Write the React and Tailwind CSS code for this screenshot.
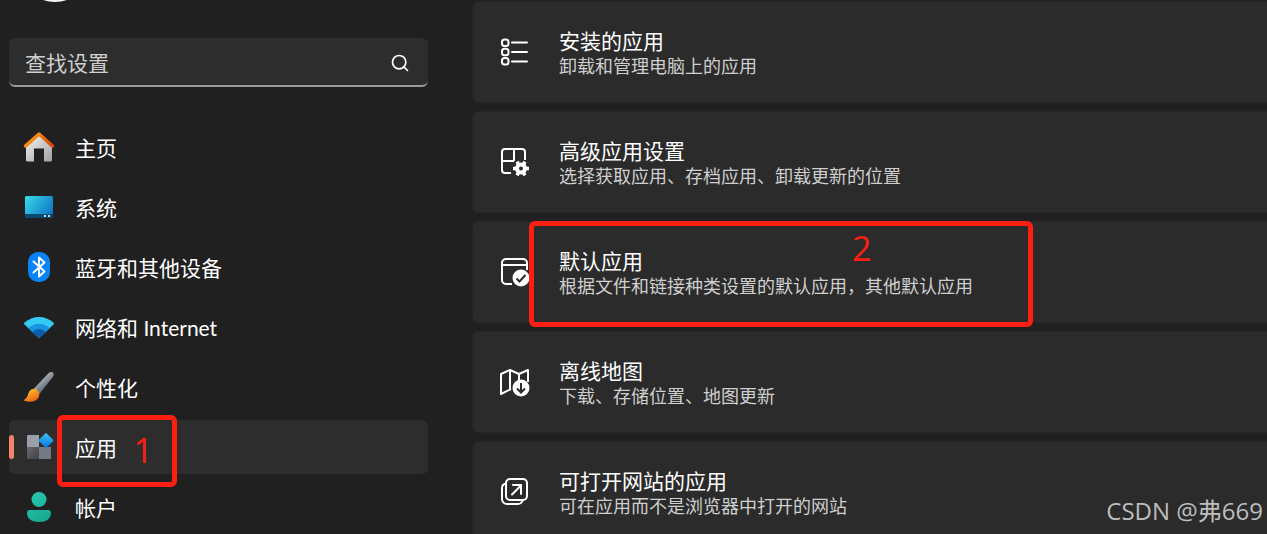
import { Search } from 'lucide-react'

/* ── Sidebar icons ── */

function HomeIcon() {
  return (
    <svg width="32" height="32" viewBox="0 0 32 32" fill="none">
      <defs>
        <linearGradient id="roof" x1="8" y1="2" x2="24" y2="18" gradientUnits="userSpaceOnUse">
          <stop stopColor="#ff9c12" />
          <stop offset="1" stopColor="#d9480a" />
        </linearGradient>
        <linearGradient id="wall" x1="5" y1="6" x2="27" y2="30" gradientUnits="userSpaceOnUse">
          <stop stopColor="#f0f0f0" />
          <stop offset="1" stopColor="#a3a3a3" />
        </linearGradient>
      </defs>
      <path d="M3 14 16 3l13 11v15a1.500 1.500 0 0 1-1.500 1.500H21V17.500H11v13H4.500A1.500 1.500 0 0 1 3 29z" fill="url(#wall)" />
      <path d="M2.500 15 16 3l13.500 12" stroke="url(#roof)" strokeWidth="3.500" strokeLinecap="round" strokeLinejoin="round" />
    </svg>
  )
}

function SystemIcon() {
  return (
    <svg width="32" height="32" viewBox="0 0 32 32">
      <defs>
        <linearGradient id="screen" x1="2" y1="5" x2="28" y2="24" gradientUnits="userSpaceOnUse">
          <stop stopColor="#38dce8" />
          <stop offset="1" stopColor="#0f74c6" />
        </linearGradient>
      </defs>
      <rect x="2" y="5" width="28" height="22" rx="1.500" fill="url(#screen)" />
      <path d="M2 23h28v2.500a1.500 1.500 0 0 1-1.500 1.500h-25A1.500 1.500 0 0 1 2 25.500z" fill="#0b4a70" />
      <path d="M21 24h2v2h-2zM25 24h2v2h-2z" fill="#c3dcea" />
    </svg>
  )
}

function BluetoothIcon() {
  return (
    <svg width="32" height="32" viewBox="0 0 32 32" fill="none">
      <rect x="5" y="1" width="22" height="30" rx="10" fill="#0a84f5" />
      <path d="m10.500 10.500 11 10L16 25.500V6.500l5.500 5-11 10" stroke="#fff" strokeWidth="2" strokeLinecap="round" strokeLinejoin="round" />
    </svg>
  )
}

function NetworkIcon() {
  return (
    <svg width="32" height="32" viewBox="0 0 32 32">
      <path d="M1.500 13.500a1.500 1.500 0 0 1 0-2C9.500 4 22.500 4 30.500 11.500a1.500 1.500 0 0 1 0 2L17 26.300a1.500 1.500 0 0 1-2 0z" fill="#35c9f5" />
      <path d="M5.500 17.200C11.500 11.200 20.500 11.200 26.500 17.200L17 26.300a1.500 1.500 0 0 1-2 0z" fill="#1793e3" />
      <path d="M9.500 21.100c4-4 9-4 13 0L17 26.300a1.500 1.500 0 0 1-2 0z" fill="#0c5cab" />
    </svg>
  )
}

function BrushIcon() {
  return (
    <svg width="32" height="32" viewBox="0 0 32 32">
      <defs>
        <linearGradient id="handle" x1="15" y1="8" x2="22" y2="16" gradientUnits="userSpaceOnUse">
          <stop stopColor="#b7bec5" />
          <stop offset="1" stopColor="#6a737c" />
        </linearGradient>
        <linearGradient id="bristle" x1="6" y1="17" x2="13" y2="31" gradientUnits="userSpaceOnUse">
          <stop stopColor="#ffc531" />
          <stop offset="1" stopColor="#e8590c" />
        </linearGradient>
      </defs>
      <path d="M10.500 18 25.500 2.200c1.500-1.500 3.500-1.500 4.500-.7 1 1 .8 2.700 0 4.200L16 23.500z" fill="url(#handle)" />
      <path d="M6 21c2-3.500 6-4.200 8.500-1.800 2.500 2.500 2.300 6.300-.3 9C11.500 31 6 31.300 1.500 29.800c-.7-.3-.6-1 0-1.400C5 26.500 4.500 23.500 6 21z" fill="url(#bristle)" />
    </svg>
  )
}

function AppsIcon() {
  return (
    <svg width="32" height="32" viewBox="0 0 32 32">
      <defs>
        <linearGradient id="tile" x1="4" y1="16" x2="16" y2="28" gradientUnits="userSpaceOnUse">
          <stop stopColor="#66696d" />
          <stop offset="1" stopColor="#3f4145" />
        </linearGradient>
        <linearGradient id="diamond" x1="17" y1="3" x2="27" y2="15" gradientUnits="userSpaceOnUse">
          <stop stopColor="#41c9f5" />
          <stop offset="1" stopColor="#0b76d8" />
        </linearGradient>
      </defs>
      <path d="M5 4h11v12H4V5a1 1 0 0 1 1-1z" fill="#9ba0a8" />
      <path d="M4 16h12v12H5a1 1 0 0 1-1-1z" fill="url(#tile)" />
      <path d="M16 16h12v11a1 1 0 0 1-1 1H16z" fill="#747a83" />
      <rect x="17.500" y="4" width="11" height="11" rx="1" transform="rotate(45 23 9.500)" fill="url(#diamond)" />
    </svg>
  )
}

function AccountIcon() {
  return (
    <svg width="32" height="32" viewBox="0 0 32 32">
      <defs>
        <linearGradient id="person" x1="8" y1="1" x2="24" y2="31" gradientUnits="userSpaceOnUse">
          <stop stopColor="#27cbb0" />
          <stop offset="1" stopColor="#15a68e" />
        </linearGradient>
      </defs>
      <circle cx="16" cy="8.500" r="7.500" fill="url(#person)" />
      <path d="M7 19h18a3 3 0 0 1 3 3c0 6-5 9-12 9S4 28 4 22a3 3 0 0 1 3-3z" fill="url(#person)" />
    </svg>
  )
}

/* ── Card icons ── */

function ListIcon() {
  return (
    <svg width="32" height="32" viewBox="0 0 32 32" fill="none" stroke="#fff" strokeWidth="2">
      <rect x="3" y="3.500" width="6.500" height="6.500" rx="2.500" />
      <rect x="3" y="12.700" width="6.500" height="6.500" rx="2.500" />
      <rect x="3" y="22" width="6.500" height="6.500" rx="2.500" />
      <path d="M13 6.500h15M13 16h15M13 25.500h15" strokeLinecap="round" />
    </svg>
  )
}

function AdvancedIcon() {
  return (
    <svg width="32" height="32" viewBox="0 0 32 32" fill="none">
      <path d="M12 27H6a3 3 0 0 1-3-3V6a3 3 0 0 1 3-3h17a3 3 0 0 1 3 3v8M15 3v12M3 15h12" stroke="#fff" strokeWidth="2" />
      {/* six-toothed gear */}
      <path d="M14 22.500h16M18 15.600l8 13.800M26 15.600l-8 13.800" stroke="#fff" strokeWidth="3.500" />
      <circle cx="22" cy="22.500" r="6" fill="#fff" />
      <circle cx="22" cy="22.500" r="2" fill="#2b2b2b" />
    </svg>
  )
}

function DefaultIcon() {
  return (
    <svg width="32" height="32" viewBox="0 0 32 32" fill="none">
      <path d="M13 28H7a4 4 0 0 1-4-4V7a4 4 0 0 1 4-4h17a4 4 0 0 1 4 4v7M3 9h25" stroke="#fff" strokeWidth="2" />
      <circle cx="22" cy="22" r="8.500" fill="#fff" />
      <path d="m17.500 22.500 3 3 6-6.500" stroke="#2b2b2b" strokeWidth="2" />
    </svg>
  )
}

function MapIcon() {
  return (
    <svg width="32" height="32" viewBox="0 0 32 32" fill="none">
      <path d="M12 23 2 28V8l9-4 9 4 9-4v12M11 4v20M20 8v6" stroke="#fff" strokeWidth="2" strokeLinejoin="round" />
      <circle cx="22" cy="22" r="8.500" fill="#fff" />
      <path d="M22 17v9M18 22.500l4 4 4-4" stroke="#2b2b2b" strokeWidth="2" />
    </svg>
  )
}

function WebsiteIcon() {
  return (
    <svg width="32" height="32" viewBox="0 0 32 32" fill="none" stroke="#fff" strokeWidth="2">
      <rect x="7" y="3" width="21" height="21" rx="4" />
      <path d="M7 7.500C4.500 8 3 9 3 12v11a5 5 0 0 0 5 5h11c3 0 4-1.500 5-4" />
      <path d="M13 18.500 22 9.500M14 9h8v9" strokeLinecap="round" />
    </svg>
  )
}

const NAV_ITEMS = [
  { label: '主页', icon: HomeIcon },
  { label: '系统', icon: SystemIcon },
  { label: '蓝牙和其他设备', icon: BluetoothIcon },
  { label: '网络和 Internet', icon: NetworkIcon },
  { label: '个性化', icon: BrushIcon },
  { label: '应用', icon: AppsIcon, active: true, step: '1' },
  { label: '帐户', icon: AccountIcon },
]

const CARDS = [
  { title: '安装的应用', text: '卸载和管理电脑上的应用', icon: ListIcon },
  { title: '高级应用设置', text: '选择获取应用、存档应用、卸载更新的位置', icon: AdvancedIcon },
  { title: '默认应用', text: '根据文件和链接种类设置的默认应用，其他默认应用', icon: DefaultIcon, step: '2' },
  { title: '离线地图', text: '下载、存储位置、地图更新', icon: MapIcon },
  { title: '可打开网站的应用', text: '可在应用而不是浏览器中打开的网站', icon: WebsiteIcon },
]

function Sidebar() {
  return (
    <aside className="w-[419px] shrink-0">
      {/* ── Avatar, scrolled almost out of view ── */}
      <div className="-mt-[72px] ml-[9px] size-[74px] rounded-full bg-[#f1f5f5]" />

      <label className="mt-9 flex h-[49px] items-center rounded-md border-b-2 border-[#9a9a9a] bg-[#2d2d2d] pt-0.5 pr-[18px] pl-4">
        <input
          type="text"
          aria-label="查找设置"
          placeholder="查找设置"
          className="min-w-0 flex-1 bg-transparent outline-none placeholder:text-[#cfcfcf]"
        />
        <Search size={20} strokeWidth={2} className="text-white" />
      </label>

      <nav className="mt-[33px] flex flex-col gap-1.5 font-['Lato','Noto_Sans_CJK_SC',sans-serif]">
        {NAV_ITEMS.map(({ label, icon: Icon, active, step }) => (
          <a
            key={label}
            href="#"
            className={[
              'relative flex h-[54px] items-center gap-5 rounded-md pl-3.5',
              active ? 'bg-[#2d2d2d]' : '',
            ].join(' ')}
          >
            {active && <span className="absolute top-[15px] left-0 h-6 w-[5px] rounded-full bg-[#f4836b]" />}
            <Icon />
            <span className="pt-0.5">{label}</span>
            {step && (
              <span className="absolute -top-[5px] left-12 h-[72px] w-[120px] rounded-md border-[5px] border-[#ff1f12] pt-3 pr-[19px] text-right font-['Open_Sans'] text-[34px] leading-9 text-[#ff1f12]">
                {step}
              </span>
            )}
          </a>
        ))}
      </nav>
    </aside>
  )
}

export default function App() {
  return (
    <div className="relative flex h-screen gap-11 overflow-hidden bg-[#202020] pl-[9px] font-['Open_Sans','Noto_Sans_CJK_SC',sans-serif] text-[21px] leading-7 text-white">
      <Sidebar />

      <main className="flex min-w-0 flex-1 flex-col gap-2 pt-px">
        {CARDS.map(({ title, text, icon: Icon, step }) => (
          <a
            key={title}
            href="#"
            className="relative flex h-[102px] shrink-0 items-center gap-7 rounded-l-md border border-r-0 border-[#252525] bg-[#2b2b2b] pl-[26px]"
          >
            <Icon />
            <span className="flex min-w-0 flex-col pt-1">
              <span className="leading-6">{title}</span>
              <span className="text-[18px] leading-[26px] whitespace-nowrap text-[#cfcfcf]">{text}</span>
            </span>
            {step && (
              <span className="absolute -top-px left-14 h-[106px] w-[504px] rounded-md border-[5px] border-[#ff1f12] pt-1 pl-[318px] text-[34px] leading-9 text-[#ff1f12]">
                {step}
              </span>
            )}
          </a>
        ))}
      </main>

      {/* ── Watermark ── */}
      <span className="absolute right-1 bottom-[7px] text-[24px] leading-8 text-[#bdbdbd]">CSDN @弗669</span>
    </div>
  )
}
